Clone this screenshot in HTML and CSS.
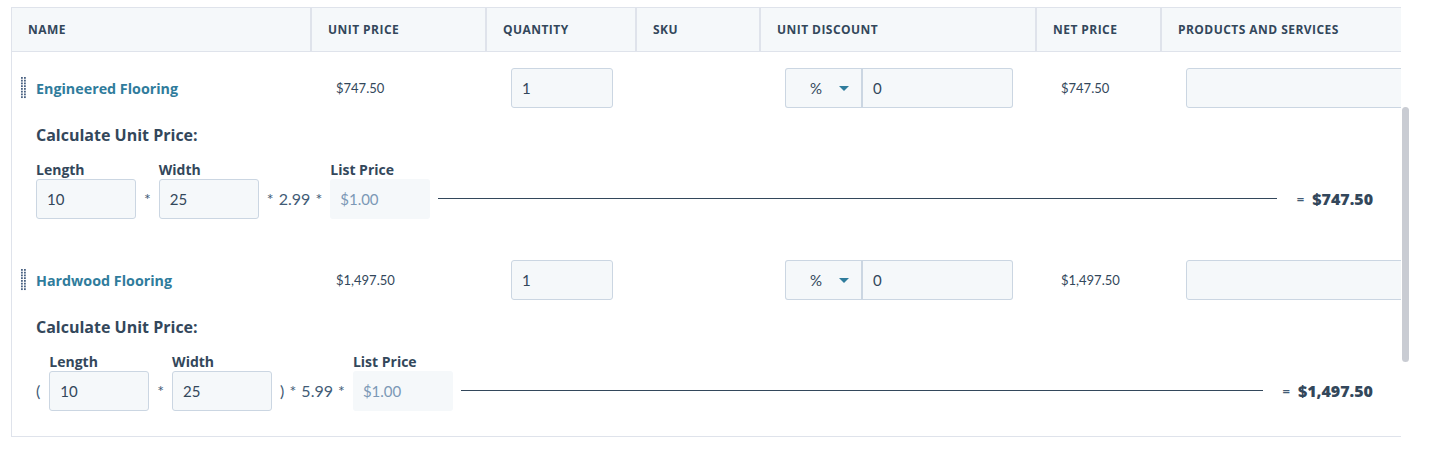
FILE: index.html
```html
<!DOCTYPE html>
<html>
<head>
<meta charset="utf-8">
<link rel="stylesheet" href="styles.css">
</head>
<body>
<div class="page">
  <div class="table">
    <div class="head">
      <div class="th">Name</div>
      <div class="th">Unit price</div>
      <div class="th">Quantity</div>
      <div class="th">SKU</div>
      <div class="th">Unit discount</div>
      <div class="th">Net price</div>
      <div class="th">Products and services</div>
    </div>

    <div class="item">
      <div class="line">
        <div class="cell name"><svg class="handle" width="5" height="22" viewBox="0 0 5 22"><g fill="#4a6282"><rect x="0" y="0" width="1.8" height="1.8"/><rect x="3" y="0" width="1.8" height="1.8"/><rect x="0" y="2.75" width="1.8" height="1.8"/><rect x="3" y="2.75" width="1.8" height="1.8"/><rect x="0" y="5.5" width="1.8" height="1.8"/><rect x="3" y="5.5" width="1.8" height="1.8"/><rect x="0" y="8.25" width="1.8" height="1.8"/><rect x="3" y="8.25" width="1.8" height="1.8"/><rect x="0" y="11" width="1.8" height="1.8"/><rect x="3" y="11" width="1.8" height="1.8"/><rect x="0" y="13.75" width="1.8" height="1.8"/><rect x="3" y="13.75" width="1.8" height="1.8"/><rect x="0" y="16.5" width="1.8" height="1.8"/><rect x="3" y="16.5" width="1.8" height="1.8"/><rect x="0" y="19.25" width="1.8" height="1.8"/><rect x="3" y="19.25" width="1.8" height="1.8"/></g></svg><a class="link">Engineered Flooring</a></div>
        <div class="cell">$747.50</div>
        <div class="cell"><div class="input qty">1</div></div>
        <div class="cell"></div>
        <div class="cell"><div class="discount"><div class="sel">%<span class="caret"></span></div><div class="input disc">0</div></div></div>
        <div class="cell">$747.50</div>
        <div class="cell"><div class="input prod"></div></div>
      </div>
      <div class="calc">
        <div class="calc-title">Calculate Unit Price:</div>
        <div class="formula">
          <div class="field"><div class="label">Length</div><div class="input num">10</div></div>
          <span class="op">*</span>
          <div class="field"><div class="label">Width</div><div class="input num">25</div></div>
          <span class="op">* 2.99 *</span>
          <div class="field"><div class="label">List Price</div><div class="list">$1.00</div></div>
          <div class="rule"></div>
          <span class="eq">=</span>
          <span class="total">$747.50</span>
        </div>
      </div>
    </div>

    <div class="item">
      <div class="line">
        <div class="cell name"><svg class="handle" width="5" height="22" viewBox="0 0 5 22"><g fill="#4a6282"><rect x="0" y="0" width="1.8" height="1.8"/><rect x="3" y="0" width="1.8" height="1.8"/><rect x="0" y="2.75" width="1.8" height="1.8"/><rect x="3" y="2.75" width="1.8" height="1.8"/><rect x="0" y="5.5" width="1.8" height="1.8"/><rect x="3" y="5.5" width="1.8" height="1.8"/><rect x="0" y="8.25" width="1.8" height="1.8"/><rect x="3" y="8.25" width="1.8" height="1.8"/><rect x="0" y="11" width="1.8" height="1.8"/><rect x="3" y="11" width="1.8" height="1.8"/><rect x="0" y="13.75" width="1.8" height="1.8"/><rect x="3" y="13.75" width="1.8" height="1.8"/><rect x="0" y="16.5" width="1.8" height="1.8"/><rect x="3" y="16.5" width="1.8" height="1.8"/><rect x="0" y="19.25" width="1.8" height="1.8"/><rect x="3" y="19.25" width="1.8" height="1.8"/></g></svg><a class="link">Hardwood Flooring</a></div>
        <div class="cell">$1,497.50</div>
        <div class="cell"><div class="input qty">1</div></div>
        <div class="cell"></div>
        <div class="cell"><div class="discount"><div class="sel">%<span class="caret"></span></div><div class="input disc">0</div></div></div>
        <div class="cell">$1,497.50</div>
        <div class="cell"><div class="input prod"></div></div>
      </div>
      <div class="calc">
        <div class="calc-title">Calculate Unit Price:</div>
        <div class="formula">
          <span class="op paren">(</span>
          <div class="field"><div class="label">Length</div><div class="input num">10</div></div>
          <span class="op">*</span>
          <div class="field"><div class="label">Width</div><div class="input num">25</div></div>
          <span class="op">) * 5.99 *</span>
          <div class="field"><div class="label">List Price</div><div class="list">$1.00</div></div>
          <div class="rule"></div>
          <span class="eq">=</span>
          <span class="total">$1,497.50</span>
        </div>
      </div>
    </div>
  </div>
  <div class="scrollbar"></div>
</div>
</body>
</html>
```

FILE: styles.css
```css
* { box-sizing: border-box; }
html, body { margin: 0; padding: 0; background: #fff; }
body {
  font-family: "Open Sans", "Liberation Sans", sans-serif;
  color: #33475b;
  font-size: 14px;
}
.page { position: relative; height: 459px; padding: 7px 0 0 11px; }
.table {
  width: 1390px;
  border-top: 1px solid #dfe3eb;
  border-left: 1px solid #dfe3eb;
  border-bottom: 1px solid #dfe3eb;
  overflow: hidden;
}
.head, .line {
  display: grid;
  grid-template-columns: 300px 175px 150px 124px 276px 125px 300px;
  width: 1450px;
}
.head {
  background: #f5f8fa;
  height: 44px;
  border-bottom: 1px solid #dfe3eb;
}
.th {
  border-right: 2px solid #dfe3eb;
  padding-left: 16px;
  display: flex;
  align-items: center;
  text-transform: uppercase;
  font-size: 12px;
  font-weight: 700;
  letter-spacing: 0.45px;
  color: #33475b;
}
.th:last-child { border-right: none; }

.item { padding-bottom: 25px; }
.line { padding-top: 16px; }
.cell {
  height: 40px;
  display: flex;
  align-items: center;
  padding-left: 24px;
  font-family: Lato, "Open Sans", sans-serif;
  font-size: 13px;
}
.cell.name { padding-left: 9px; font-family: "Open Sans", sans-serif; }
.handle { margin-right: 10px; flex: none; }
.link {
  color: #2f7c9c;
  font-weight: 700;
  font-size: 14.3px;
}
.input {
  height: 40px;
  background: #f5f8fa;
  border: 1px solid #cbd6e2;
  border-radius: 3px;
  display: flex;
  align-items: center;
  padding-left: 10px;
  font-family: Lato, "Open Sans", sans-serif;
  font-size: 15px;
  color: #33475b;
}
.qty { width: 102px; }
.prod { width: 260px; }
.discount { display: flex; }
.sel {
  width: 78px;
  height: 40px;
  background: #f5f8fa;
  border: 1px solid #cbd6e2;
  border-right-width: 2px;
  border-radius: 3px 0 0 3px;
  display: flex;
  align-items: center;
  padding-left: 24px;
  font-family: Lato, "Open Sans", sans-serif;
  font-size: 15px;
}
.caret {
  margin-left: 17px;
  width: 0; height: 0;
  border-left: 5px solid transparent;
  border-right: 5px solid transparent;
  border-top: 5px solid #2f7c9c;
}
.disc {
  width: 150px;
  border-left: none;
  border-radius: 0 3px 3px 0;
}

.calc { padding: 0 28px 0 24px; }
.calc-title {
  margin-top: 17px;
  font-size: 16px;
  font-weight: 700;
  line-height: 20px;
}
.formula {
  margin-top: 16px;
  display: flex;
  align-items: flex-end;
}
.field { display: flex; flex-direction: column; }
.label {
  font-size: 14px;
  font-weight: 700;
  line-height: 17px;
  margin-bottom: 1px;
}
.num { width: 100px; }
.list {
  width: 100px;
  height: 40px;
  background: #f5f8fa;
  border-radius: 3px;
  display: flex;
  align-items: center;
  padding-left: 10px;
  color: #7c98b6;
  font-family: Lato, "Open Sans", sans-serif;
  font-size: 15px;
}
.op {
  height: 40px;
  line-height: 40px;
  padding: 0 8px;
  font-family: Lato, "Open Sans", sans-serif;
  font-size: 16px;
  word-spacing: 1px;
  color: #425b76;
}
.op.paren { padding: 0 9px 0 0; }
.rule {
  flex: 1;
  height: 1px;
  background: #33475b;
  margin: 0 0 20px 8px;
}
.eq {
  height: 40px;
  line-height: 40px;
  margin-left: 20px;
  font-size: 13px;
  font-weight: 700;
  color: #425b76;
}
.total {
  height: 40px;
  line-height: 40px;
  margin-left: 8px;
  font-size: 16px;
  font-weight: 800;
  color: #33475b;
}
.scrollbar {
  position: absolute;
  left: 1402px;
  top: 107px;
  width: 7px;
  height: 255px;
  background: #c9ccd3;
  border-radius: 4px;
}
```
